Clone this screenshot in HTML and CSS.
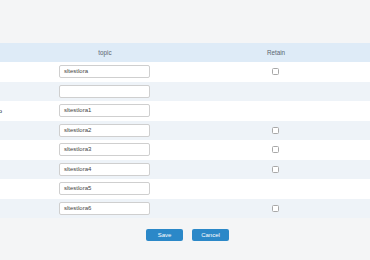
FILE: index.html
```html
<!DOCTYPE html>
<html>
<head>
<meta charset="utf-8">
<link rel="stylesheet" href="styles.css">
</head>
<body>
<div class="page">
  <div class="top"></div>
  <div class="table">
    <div class="row head">
      <div class="c0"></div>
      <div class="c1 th">topic</div>
      <div class="c2 th">Retain</div>
      <div class="c3"></div>
    </div>
    <div class="row">
      <div class="c0"></div>
      <div class="c1"><div class="inp">sltestlora</div></div>
      <div class="c2"><span class="cb"></span></div>
      <div class="c3"></div>
    </div>
    <div class="row alt">
      <div class="c0"></div>
      <div class="c1"><div class="inp"></div></div>
      <div class="c2"></div>
      <div class="c3"></div>
    </div>
    <div class="row">
      <div class="c0 lbl">Topic o</div>
      <div class="c1"><div class="inp">sltestlora1</div></div>
      <div class="c2"></div>
      <div class="c3"></div>
    </div>
    <div class="row alt">
      <div class="c0"></div>
      <div class="c1"><div class="inp">sltestlora2</div></div>
      <div class="c2"><span class="cb"></span></div>
      <div class="c3"></div>
    </div>
    <div class="row">
      <div class="c0"></div>
      <div class="c1"><div class="inp">sltestlora3</div></div>
      <div class="c2"><span class="cb"></span></div>
      <div class="c3"></div>
    </div>
    <div class="row alt">
      <div class="c0"></div>
      <div class="c1"><div class="inp">sltestlora4</div></div>
      <div class="c2"><span class="cb"></span></div>
      <div class="c3"></div>
    </div>
    <div class="row">
      <div class="c0"></div>
      <div class="c1"><div class="inp">sltestlora5</div></div>
      <div class="c2"></div>
      <div class="c3"></div>
    </div>
    <div class="row alt">
      <div class="c0"></div>
      <div class="c1"><div class="inp">sltestlora6</div></div>
      <div class="c2"><span class="cb"></span></div>
      <div class="c3"></div>
    </div>
  </div>
  <div class="actions">
    <button class="btn">Save</button>
    <button class="btn">Cancel</button>
  </div>
</div>
</body>
</html>
```
FILE: styles.css
```css
html, body {
  margin: 0;
  padding: 0;
  background: #f4f5f6;
  overflow: hidden;
}
body {
  font-family: "Liberation Sans", Arial, sans-serif;
  font-size: 6px;
  color: #444;
}
.page {
  width: 370px;
  height: 260px;
  overflow: hidden;
}
.top {
  height: 43px;
}
.table {
  margin-left: -61px;
  width: 431px;
}
.row {
  display: grid;
  grid-template-columns: 63px 206px 136px 26px;
  height: 19.5px;
  align-items: center;
  background: #ffffff;
}
.row.alt {
  background: #eef3f8;
}
.row.head {
  height: 19px;
  background: #deebf7;
}
.th {
  text-align: center;
  color: #5a6470;
  font-size: 6.3px;
}
.c1 {
  padding-left: 57px;
  height: 100%;
  display: flex;
  align-items: center;
}
.c1.th {
  padding-left: 0;
  justify-content: center;
}
.c2 {
  height: 100%;
  display: flex;
  align-items: center;
  justify-content: center;
}
.lbl {
  text-align: right;
  font-size: 6px;
  color: #222;
  white-space: nowrap;
}
.inp {
  box-sizing: border-box;
  width: 91px;
  height: 13px;
  border: 1px solid #cfcfcf;
  border-radius: 2px;
  background: #fff;
  padding-left: 4px;
  line-height: 11px;
  font-size: 6px;
  color: #444;
}
.cb {
  display: block;
  box-sizing: border-box;
  width: 7px;
  height: 7px;
  border: 1px solid #a8a8a8;
  border-radius: 1.5px;
  background: #fff;
  margin-left: -1px;
}
.actions {
  display: flex;
  justify-content: center;
  gap: 9px;
  padding-top: 11px;
  padding-left: 5px;
}
.btn {
  width: 37px;
  height: 12px;
  padding: 0;
  border: none;
  border-radius: 2px;
  background: #2b88c8;
  color: #fff;
  font-family: "Liberation Sans", Arial, sans-serif;
  font-size: 6px;
  line-height: 12px;
}
```
